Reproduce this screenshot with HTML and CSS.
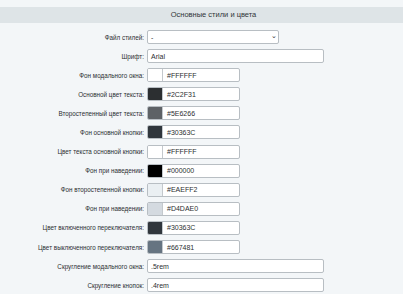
FILE: index.html
```html
<!DOCTYPE html>
<html lang="ru">
<head>
  <meta charset="UTF-8" />
  <title>Основные стили и цвета</title>
  <link rel="stylesheet" href="styles.css">
</head>
<body>

  <div class="section-title">Основные стили и цвета</div>

  <div class="form">
    <label class="label">Файл стилей:</label>
    <div class="select"><span>-</span><span class="chevron">&#8964;</span></div>

    <label class="label">Шрифт:</label>
    <div class="input wide">Arial</div>

    <label class="label">Фон модального окна:</label>
    <div class="color"><span class="swatch" style="background:#FFFFFF"></span><span class="hex">#FFFFFF</span></div>

    <label class="label">Основной цвет текста:</label>
    <div class="color"><span class="swatch" style="background:#2C2F31"></span><span class="hex">#2C2F31</span></div>

    <label class="label">Второстепенный цвет текста:</label>
    <div class="color"><span class="swatch" style="background:#5E6266"></span><span class="hex">#5E6266</span></div>

    <label class="label">Фон основной кнопки:</label>
    <div class="color"><span class="swatch" style="background:#30363C"></span><span class="hex">#30363C</span></div>

    <label class="label">Цвет текста основной кнопки:</label>
    <div class="color"><span class="swatch" style="background:#FFFFFF"></span><span class="hex">#FFFFFF</span></div>

    <label class="label">Фон при наведении:</label>
    <div class="color"><span class="swatch" style="background:#000000"></span><span class="hex">#000000</span></div>

    <label class="label">Фон второстепенной кнопки:</label>
    <div class="color"><span class="swatch" style="background:#EAEFF2"></span><span class="hex">#EAEFF2</span></div>

    <label class="label">Фон при наведении:</label>
    <div class="color"><span class="swatch" style="background:#D4DAE0"></span><span class="hex">#D4DAE0</span></div>

    <label class="label">Цвет включенного переключателя:</label>
    <div class="color"><span class="swatch" style="background:#30363C"></span><span class="hex">#30363C</span></div>

    <label class="label">Цвет выключенного переключателя:</label>
    <div class="color"><span class="swatch" style="background:#667481"></span><span class="hex">#667481</span></div>

    <label class="label">Скругление модального окна:</label>
    <div class="input wide">.5rem</div>

    <label class="label">Скругление кнопок:</label>
    <div class="input wide">.4rem</div>
  </div>

</body>
</html>
```

FILE: styles.css
```css
body, html {
  margin: 0; padding: 0;
  background: #f3f6f8;
  font-family: 'Liberation Sans', Arial, sans-serif;
  color: #2c2f31;
  overflow: hidden;
}

/* Заголовок секции */
.section-title {
  margin-top: 7px;
  height: 16px;
  line-height: 16px;
  padding-left: 24px;
  background: #dee4e7;
  text-align: center;
  font-size: 7.5px;
  color: #2f3438;
}

/* Форма */
.form {
  display: grid;
  grid-template-columns: 144px 1fr;
  column-gap: 3px;
  row-gap: 5.1px;
  padding-top: 7px;
  align-items: center;
}

.label {
  text-align: right;
  font-size: 6.3px;
  color: #2c2f31;
}

.select,
.input,
.color {
  box-sizing: border-box;
  height: 14px;
  background: #fff;
  border: 1px solid #b8bec3;
  border-radius: 2px;
  font-size: 7px;
  color: #2c2f31;
}

.select {
  width: 132px;
  display: flex;
  align-items: center;
  justify-content: space-between;
  padding: 0 1px 0 3px;
}
.chevron {
  font-size: 7px;
  line-height: 7px;
  margin-top: -4px;
}

.input {
  display: flex;
  align-items: center;
  padding: 0 3px;
}
.wide {
  width: 177px;
}

/* Поле цвета */
.color {
  width: 93px;
  display: flex;
  align-items: stretch;
  overflow: hidden;
}
.swatch {
  width: 14px;
  border-right: 1px solid #c4c9cd;
}
.hex {
  display: flex;
  align-items: center;
  padding-left: 4px;
}
```
